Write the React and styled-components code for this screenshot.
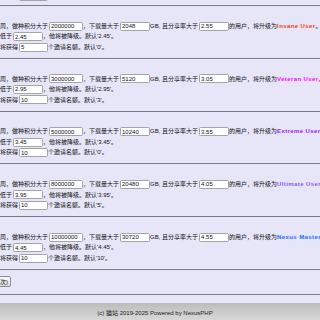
import React from "react";
import styled, { createGlobalStyle } from "styled-components";

const GlobalStyle = createGlobalStyle`
  html, body {
    margin: 0;
    padding: 0;
    background: #e6e6f8;
    overflow: hidden;
  }
  body {
    font-family: "Liberation Sans", "Noto Sans CJK SC", sans-serif;
    font-size: 6px;
    color: #111;
  }
`;

const rows = [
  { score: "2000000", dl: "2048", ratio: "2.55", name: "Insane User", color: "#ff3a0a", down: "2.45", inv: "5", invDef: "0" },
  { score: "3000000", dl: "5120", ratio: "3.05", name: "Veteran User", color: "#ff00ff", down: "2.95", inv: "10", invDef: "3" },
  { score: "5000000", dl: "10240", ratio: "3.55", name: "Extreme User", color: "#a020f0", down: "3.45", inv: "10", invDef: "0" },
  { score: "8000000", dl: "20480", ratio: "4.05", name: "Ultimate User", color: "#8a55ff", down: "3.95", inv: "10", invDef: "5" },
  { score: "10000000", dl: "30720", ratio: "4.55", name: "Nexus Master", color: "#1a6dff", down: "4.45", inv: "10", invDef: "10" },
];

function App() {
  return (
    <Page>
      <GlobalStyle />
      <Table>
        <PrevRow>
          <PrevLine>
            将获得<Field $w={29} defaultValue="5" />个邀请名额。默认'2'。
          </PrevLine>
        </PrevRow>
        {rows.map((r) => (
          <Row key={r.name}>
            <Line>
              周，做种积分大于<Field $w={34} defaultValue={r.score} />，下载量大于
              <Field $w={30} defaultValue={r.dl} />GB, 且分享率大于
              <Field $w={30} defaultValue={r.ratio} />的用户，将升级为
              <Klass $color={r.color}>{r.name}</Klass>。
            </Line>
            <Line>
              低于<Field $w={30} defaultValue={r.down} />，他将被降级。默认'{r.down}'。
            </Line>
            <Line>
              将获得<Field $w={29} defaultValue={r.inv} />个邀请名额。默认'{r.invDef}'。
            </Line>
          </Row>
        ))}
        <ButtonRow>
          <ButtonSlot>
            <SaveButton>保存设置(只需点击一次)</SaveButton>
          </ButtonSlot>
        </ButtonRow>
      </Table>
      <Gap />
      <Footer>(c) 猫站 2019-2025 Powered by NexusPHP</Footer>
    </Page>
  );
}

export default App;

const Page = styled.div`
  width: 320px;
  height: 320px;
  overflow: hidden;
  display: flex;
  flex-direction: column;
  background: #e6e6f8;
`;

const Table = styled.div`
  display: flex;
  flex-direction: column;
`;

const PrevRow = styled.div`
  height: 5px;
  overflow: hidden;
  display: flex;
  align-items: flex-end;
  border-bottom: 1px solid #7c7c84;
  white-space: nowrap;
`;

const Line = styled.div`
  height: 10.5px;
  line-height: 10.5px;
  white-space: nowrap;
`;

const PrevLine = styled(Line)`
  flex-shrink: 0;
  margin-bottom: 3.25px;
`;

const Row = styled.div`
  padding: 14.75px 0 5.5px;
  border-bottom: 1px solid #7c7c84;
  white-space: nowrap;
`;

const Field = styled.input`
  width: ${(p) => p.$w}px;
  height: 9px;
  box-sizing: border-box;
  margin: 0 0.5px;
  padding: 0 1.5px;
  border: 1px solid #a4a4a8;
  border-radius: 1.5px;
  background: #fff;
  color: #111;
  font: 6px "Liberation Sans", sans-serif;
  vertical-align: middle;
  outline: none;
`;

const Klass = styled.b`
  color: ${(p) => p.$color};
  font-weight: bold;
  letter-spacing: 0.4px;
`;

const ButtonRow = styled.div`
  height: 24px;
  display: flex;
  align-items: center;
  border-bottom: 1px solid #7c7c84;
`;

const ButtonSlot = styled.div`
  width: 11px;
  display: flex;
  justify-content: flex-end;
`;

const SaveButton = styled.button`
  flex-shrink: 0;
  height: 11px;
  padding: 0 2px;
  border: 1px solid #8c8c8c;
  border-radius: 2px;
  background: linear-gradient(#fbfbfb, #dcdcdc);
  color: #111;
  font: 6px "Liberation Sans", "Noto Sans CJK SC", sans-serif;
  white-space: nowrap;
`;

const Gap = styled.div`
  height: 8px;
`;

const Footer = styled.div`
  flex: 1;
  padding: 6px 10px 0 0;
  background: linear-gradient(#bcbcbc, #d8d8d8);
  color: #222;
  text-align: center;
  line-height: 8px;
  white-space: nowrap;
`;
